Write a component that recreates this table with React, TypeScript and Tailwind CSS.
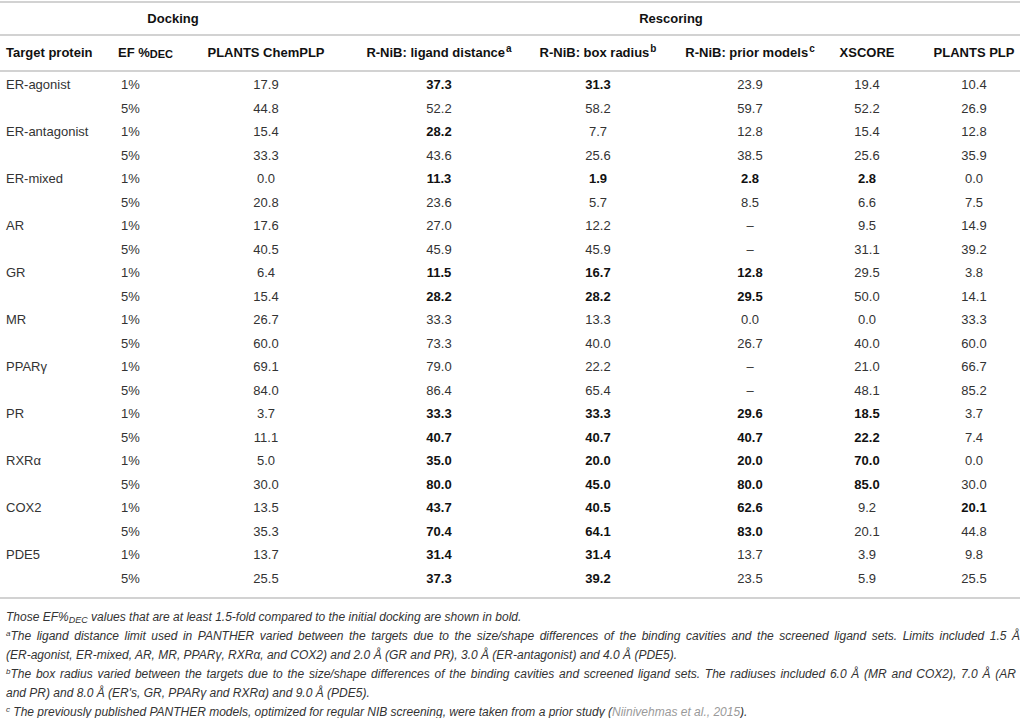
import React from 'react';

type Cell = string | { b: string };

const rows: { name: string; one: Cell[]; five: Cell[] }[] = [
  { name: 'ER-agonist', one: ['17.9', { b: '37.3' }, { b: '31.3' }, '23.9', '19.4', '10.4'], five: ['44.8', '52.2', '58.2', '59.7', '52.2', '26.9'] },
  { name: 'ER-antagonist', one: ['15.4', { b: '28.2' }, '7.7', '12.8', '15.4', '12.8'], five: ['33.3', '43.6', '25.6', '38.5', '25.6', '35.9'] },
  { name: 'ER-mixed', one: ['0.0', { b: '11.3' }, { b: '1.9' }, { b: '2.8' }, { b: '2.8' }, '0.0'], five: ['20.8', '23.6', '5.7', '8.5', '6.6', '7.5'] },
  { name: 'AR', one: ['17.6', '27.0', '12.2', '–', '9.5', '14.9'], five: ['40.5', '45.9', '45.9', '–', '31.1', '39.2'] },
  { name: 'GR', one: ['6.4', { b: '11.5' }, { b: '16.7' }, { b: '12.8' }, '29.5', '3.8'], five: ['15.4', { b: '28.2' }, { b: '28.2' }, { b: '29.5' }, '50.0', '14.1'] },
  { name: 'MR', one: ['26.7', '33.3', '13.3', '0.0', '0.0', '33.3'], five: ['60.0', '73.3', '40.0', '26.7', '40.0', '60.0'] },
  { name: 'PPARγ', one: ['69.1', '79.0', '22.2', '–', '21.0', '66.7'], five: ['84.0', '86.4', '65.4', '–', '48.1', '85.2'] },
  { name: 'PR', one: ['3.7', { b: '33.3' }, { b: '33.3' }, { b: '29.6' }, { b: '18.5' }, '3.7'], five: ['11.1', { b: '40.7' }, { b: '40.7' }, { b: '40.7' }, { b: '22.2' }, '7.4'] },
  { name: 'RXRα', one: ['5.0', { b: '35.0' }, { b: '20.0' }, { b: '20.0' }, { b: '70.0' }, '0.0'], five: ['30.0', { b: '80.0' }, { b: '45.0' }, { b: '80.0' }, { b: '85.0' }, '30.0'] },
  { name: 'COX2', one: ['13.5', { b: '43.7' }, { b: '40.5' }, { b: '62.6' }, '9.2', { b: '20.1' }], five: ['35.3', { b: '70.4' }, { b: '64.1' }, { b: '83.0' }, '20.1', '44.8'] },
  { name: 'PDE5', one: ['13.7', { b: '31.4' }, { b: '31.4' }, '13.7', '3.9', '9.8'], five: ['25.5', { b: '37.3' }, { b: '39.2' }, '23.5', '5.9', '25.5'] },
];

function Value({ v, last }: { v: Cell; last?: boolean }) {
  const bold = typeof v !== 'string';
  const text = typeof v === 'string' ? v : v.b;
  return (
    <td className={`text-center ${last ? 'pl-[30px]' : ''} ${bold ? 'font-bold text-[#111]' : ''}`}>{text}</td>
  );
}

function DataRow({ name, ef, vals }: { name: string; ef: string; vals: Cell[] }) {
  return (
    <tr className="h-[23.5px]">
      <td className="pl-[6px]">{name}</td>
      <td className="pl-[9px]">{ef}</td>
      {vals.map((v, i) => (
        <Value key={i} v={v} last={i === 5} />
      ))}
    </tr>
  );
}

export default function App() {
  return (
    <div className="w-[1028px] h-[718px] overflow-hidden bg-white font-['Liberation_Sans',Arial,sans-serif] text-[13px] text-[#333]">
      <table className="mt-px w-[1020px] table-fixed border-collapse">
        <colgroup>
          <col className="w-[112px]" />
          <col className="w-[74px]" />
          <col className="w-[160px]" />
          <col className="w-[186px]" />
          <col className="w-[132px]" />
          <col className="w-[172px]" />
          <col className="w-[62px]" />
          <col className="w-[122px]" />
        </colgroup>
        <thead className="font-bold text-[#111]">
          <tr className="h-[33px] border-t-2 border-b-2 border-[#d2d2d2]">
            <th colSpan={3} className="text-center font-bold">Docking</th>
            <th colSpan={5} className="pr-[24px] text-center font-bold">Rescoring</th>
          </tr>
          <tr className="h-[36px] border-b-2 border-[#d2d2d2] whitespace-nowrap">
            <th className="pl-[6px] text-left font-bold">Target protein</th>
            <th className="pl-[6px] text-left font-bold">
              EF %<sub className="relative top-[1px] text-[11px]">DEC</sub>
            </th>
            <th className="text-center font-bold">PLANTS ChemPLP</th>
            <th className="text-center font-bold">
              R-NiB: ligand distance<sup className="ml-px text-[10px]">a</sup>
            </th>
            <th className="text-center font-bold">
              R-NiB: box radius<sup className="ml-px text-[10px]">b</sup>
            </th>
            <th className="text-center font-bold">
              R-NiB: prior models<sup className="ml-px text-[10px]">c</sup>
            </th>
            <th className="text-center font-bold">XSCORE</th>
            <th className="pl-[30px] text-center font-bold">PLANTS PLP</th>
          </tr>
        </thead>
        <tbody>
          <tr className="h-[2px]">
            <td colSpan={8}></td>
          </tr>
          {rows.map((r) => (
            <React.Fragment key={r.name}>
              <DataRow name={r.name} ef="1%" vals={r.one} />
              <DataRow name="" ef="5%" vals={r.five} />
            </React.Fragment>
          ))}
          <tr className="h-[8px] border-b-2 border-[#d2d2d2]">
            <td colSpan={8}></td>
          </tr>
        </tbody>
      </table>

      <div className="mt-[9px] w-[1020px] pl-[6px] text-[12px] italic leading-[19px] text-[#333] whitespace-nowrap">
        <div>
          Those EF%<sub className="text-[9px]">DEC</sub> values that are at least 1.5-fold compared to the initial docking are shown in bold.
        </div>
        <div className="text-justify [text-align-last:justify]">
          <sup className="text-[8px]">a</sup>The ligand distance limit used in PANTHER varied between the targets due to the size/shape differences of the binding cavities and the screened ligand sets. Limits included 1.5 Å
        </div>
        <div>(ER-agonist, ER-mixed, AR, MR, PPARγ, RXRα, and COX2) and 2.0 Å (GR and PR), 3.0 Å (ER-antagonist) and 4.0 Å (PDE5).</div>
        <div className="pr-[4px] text-justify [text-align-last:justify]">
          <sup className="text-[8px]">b</sup>The box radius varied between the targets due to the size/shape differences of the binding cavities and screened ligand sets. The radiuses included 6.0 Å (MR and COX2), 7.0 Å (AR
        </div>
        <div>and PR) and 8.0 Å (ER's, GR, PPARγ and RXRα) and 9.0 Å (PDE5).</div>
        <div>
          <sup className="text-[8px]">c</sup> The previously published PANTHER models, optimized for regular NIB screening, were taken from a prior study (
          <span className="text-[#9a9a9a]">Niinivehmas et al., 2015</span>).
        </div>
      </div>
    </div>
  );
}
